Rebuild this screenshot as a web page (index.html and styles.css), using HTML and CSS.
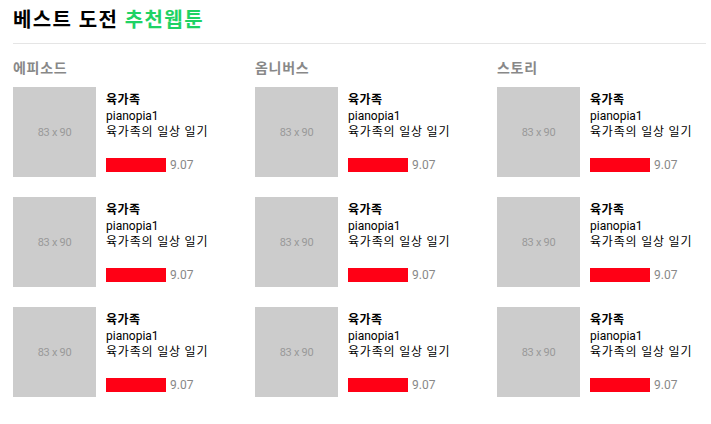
FILE: index.html
```html
<!DOCTYPE html>
<html lang="ko">
<head>
<meta charset="utf-8">
<link rel="stylesheet" href="styles.css">
</head>
<body>
<div class="page">
  <h1 class="title">베스트 도전 <span class="accent">추천웹툰</span></h1>
  <div class="cols">
    <section class="col">
      <h2 class="sec">에피소드</h2>
      <div class="item"><div class="thumb">83 x 90</div><div class="info"><div class="name">육가족</div><div class="author">pianopia1</div><div class="desc">육가족의 일상 일기</div><div class="rate"><span class="bar"></span><span class="score">9.07</span></div></div></div>
      <div class="item"><div class="thumb">83 x 90</div><div class="info"><div class="name">육가족</div><div class="author">pianopia1</div><div class="desc">육가족의 일상 일기</div><div class="rate"><span class="bar"></span><span class="score">9.07</span></div></div></div>
      <div class="item"><div class="thumb">83 x 90</div><div class="info"><div class="name">육가족</div><div class="author">pianopia1</div><div class="desc">육가족의 일상 일기</div><div class="rate"><span class="bar"></span><span class="score">9.07</span></div></div></div>
    </section>
    <section class="col">
      <h2 class="sec">옴니버스</h2>
      <div class="item"><div class="thumb">83 x 90</div><div class="info"><div class="name">육가족</div><div class="author">pianopia1</div><div class="desc">육가족의 일상 일기</div><div class="rate"><span class="bar"></span><span class="score">9.07</span></div></div></div>
      <div class="item"><div class="thumb">83 x 90</div><div class="info"><div class="name">육가족</div><div class="author">pianopia1</div><div class="desc">육가족의 일상 일기</div><div class="rate"><span class="bar"></span><span class="score">9.07</span></div></div></div>
      <div class="item"><div class="thumb">83 x 90</div><div class="info"><div class="name">육가족</div><div class="author">pianopia1</div><div class="desc">육가족의 일상 일기</div><div class="rate"><span class="bar"></span><span class="score">9.07</span></div></div></div>
    </section>
    <section class="col">
      <h2 class="sec">스토리</h2>
      <div class="item"><div class="thumb">83 x 90</div><div class="info"><div class="name">육가족</div><div class="author">pianopia1</div><div class="desc">육가족의 일상 일기</div><div class="rate"><span class="bar"></span><span class="score">9.07</span></div></div></div>
      <div class="item"><div class="thumb">83 x 90</div><div class="info"><div class="name">육가족</div><div class="author">pianopia1</div><div class="desc">육가족의 일상 일기</div><div class="rate"><span class="bar"></span><span class="score">9.07</span></div></div></div>
      <div class="item"><div class="thumb">83 x 90</div><div class="info"><div class="name">육가족</div><div class="author">pianopia1</div><div class="desc">육가족의 일상 일기</div><div class="rate"><span class="bar"></span><span class="score">9.07</span></div></div></div>
    </section>
  </div>
</div>
</body>
</html>
```
FILE: styles.css
```css
html, body { margin: 0; padding: 0; background: #fff; }
body {
  font-family: "Roboto", "Noto Sans CJK KR", sans-serif;
  color: #000;
  overflow: hidden;
}
.page {
  width: 693px;
  padding: 0 0 0 13px;
}
.title {
  margin: 0;
  padding-top: 6px;
  height: 37px;
  font-size: 20px;
  line-height: 28px;
  font-weight: 700;
  border-bottom: 1px solid #e5e5e5;
  letter-spacing: 1.4px;
}
.accent { color: #1ed264; }
.cols {
  display: grid;
  grid-template-columns: 242px 242px 242px;
}
.sec {
  margin: 0;
  padding-top: 14px;
  height: 29px;
  font-size: 14px;
  line-height: 20px;
  font-weight: 700;
  color: #888;
  letter-spacing: 0.7px;
}
.item {
  display: flex;
  gap: 10px;
  margin-bottom: 20px;
}
.thumb {
  width: 83px;
  height: 90px;
  flex: none;
  background: #cccccc;
  color: #999;
  font-size: 11px;
  display: flex;
  align-items: center;
  justify-content: center;
  letter-spacing: -0.3px;
}
.info {
  font-size: 12px;
  line-height: 16px;
  padding-top: 5px;
}
.name { font-weight: 700; letter-spacing: 0.4px; }
.desc { letter-spacing: 0.8px; }
.rate {
  display: flex;
  align-items: center;
  margin-top: 17px;
  gap: 4px;
}
.bar {
  display: block;
  width: 60px;
  height: 14px;
  background: #ff0015;
}
.score { color: #888; font-size: 12px; }
```
